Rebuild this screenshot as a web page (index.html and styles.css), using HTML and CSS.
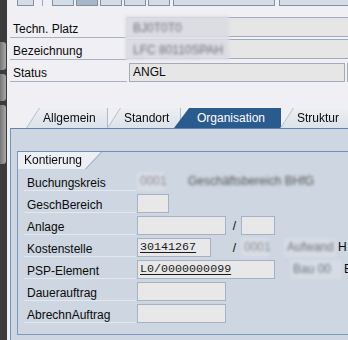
FILE: index.html
```html
<!DOCTYPE html>
<html lang="de">
<head>
  <meta charset="UTF-8" />
  <title>Technischer Platz</title>
  <link rel="stylesheet" href="styles.css">
</head>
<body>

<div class="dock">
  <span class="dock-btn b1"></span>
  <span class="dock-btn b2"></span>
  <span class="dock-btn b3"></span>
</div>

<div class="main">
  <div class="toolbar">
    <span class="tb w17"></span>
    <span class="tb-sep"></span>
    <span class="tb w22"></span>
    <span class="tb w22 dark"></span>
    <span class="tb w22"></span>
    <span class="tb w22"></span>
    <span class="tb w22"></span>
    <span class="tb w102"></span>
    <span class="tb w80 gap"></span>
  </div>

  <div class="hdr">
    <div class="row">
      <span class="lbl">Techn. Platz</span>
      <span class="fld flat"><span class="blur patch">BJ0T0T0</span></span>
    </div>
    <div class="row">
      <span class="lbl">Bezeichnung</span>
      <span class="fld flat"><span class="blur patch">LFC 80110SPAH</span></span>
    </div>
    <div class="row">
      <span class="lbl">Status</span>
      <span class="fld status">ANGL</span>
      <span class="fld rest"></span>
    </div>
  </div>

  <div class="tabs">
    <div class="tab t1"><span>Allgemein</span></div>
    <div class="tab t2"><span>Standort</span></div>
    <div class="tab on"><span>Organisation</span></div>
    <div class="tab t4"><span>Struktur</span></div>
  </div>

  <div class="panel">
    <div class="group">
      <div class="grp-head"><span>Kontierung</span></div>

      <div class="grow">
        <span class="glbl">Buchungskreis</span>
        <span class="blur bk">0001</span>
        <span class="blur bk-txt">Geschäftsbereich BHfG</span>
      </div>
      <div class="grow">
        <span class="glbl">GeschBereich</span>
        <span class="in w32"></span>
      </div>
      <div class="grow">
        <span class="glbl">Anlage</span>
        <span class="in w89"></span>
        <span class="sl s15">/</span>
        <span class="in w34"></span>
      </div>
      <div class="grow">
        <span class="glbl">Kostenstelle</span>
        <span class="in w74"><u>30141267</u></span>
        <span class="sl s30">/</span>
        <span class="blur bk w34">0001</span>
        <span class="blur side">Aufwand</span>
        <span class="cut">H</span>
      </div>
      <div class="grow">
        <span class="glbl">PSP-Element</span>
        <span class="in w138"><u>L0/0000000099</u></span>
        <span class="blur side">Bau 00</span>
        <span class="cut">E</span>
      </div>
      <div class="grow">
        <span class="glbl">Dauerauftrag</span>
        <span class="in w89"></span>
      </div>
      <div class="grow">
        <span class="glbl">AbrechnAuftrag</span>
        <span class="in w89"></span>
      </div>
    </div>
  </div>
</div>

</body>
</html>
```

FILE: styles.css
```css
* { box-sizing: border-box; }
body {
  margin: 0;
  width: 348px;
  height: 340px;
  overflow: hidden;
  display: flex;
  background: #efeff4;
  color: #0a0a0a;
  font-family: "Liberation Sans", Arial, sans-serif;
  font-size: 12px;
}

/* left dock */
.dock {
  flex: none;
  width: 7px;
  background: #3b3b3b;
  display: flex;
  flex-direction: column;
  gap: 4px;
  padding-top: 42px;
}
.dock-btn {
  display: block;
  margin-right: 1px;
  background: linear-gradient(to right, #767676, #a8a8a8);
  border-radius: 0 3px 3px 0;
}
.b1 { height: 28px; }
.b2 { height: 27px; }
.b3 { height: 59px; }

.main { flex: 1; min-width: 0; }

/* toolbar strip */
.toolbar {
  display: flex;
  align-items: flex-start;
  gap: 2px;
  height: 7px;
  padding-left: 10px;
  white-space: nowrap;
}
.tb {
  flex: none;
  height: 6px;
  border: 1px solid #7f92a8;
  border-top: none;
  background: #d5dce6;
}
.tb.dark { background: #a9b6c6; }
.tb-sep { flex: none; width: 1px; height: 6px; background: #9aa7b8; margin: 0 7px 0 6px; }
.w17 { width: 17px; }
.w22 { width: 22px; }
.w102 { width: 102px; margin-left: 1px; }
.w80 { width: 80px; }
.tb.gap { margin-left: 2px; }

/* header rows */
.hdr { padding: 9px 0 0 3px; }
.row {
  display: flex;
  align-items: flex-end;
  height: 22px;
}
.lbl {
  flex: none;
  width: 117px;
  height: 22px;
  padding: 6px 0 0 3px;
  line-height: 14px;
  border-bottom: 1px solid #a7b1bf;
}
.fld {
  height: 19px;
  border: 1px solid #a0acbb;
  background: #e6e6e6;
  line-height: 17px;
  padding-left: 3px;
}
.fld.flat {
  flex: 1;
  height: 20px;
  padding-left: 0;
  margin-bottom: 1px;
  border-right: none;
  display: flex;
}
.fld.status { flex: none; width: 216px; margin-left: 2px; }
.fld.rest { flex: 1; margin-left: 2px; border-right: none; }

.blur { filter: blur(1.4px); color: #6c6c7a; }
.patch {
  flex: none;
  width: 104px;
  margin: -2px 0 -2px -3px;
  padding: 4px 0 0 8px;
  background: #dcdde2;
}

/* tabs */
.tabs {
  display: flex;
  margin-top: 26px;
  padding-left: 20px;
  height: 20px;
}
.tab {
  flex: none;
  height: 20px;
  filter: drop-shadow(-1px 0 0 #b3bfcc);
}
.tab span {
  display: block;
  height: 20px;
  line-height: 20px;
  padding-left: 16px;
  background: linear-gradient(#eceff3, #dce2e9);
  border-right: 1px solid #b0bbc8;
  clip-path: polygon(13px 0, 100% 0, 100% 100%, 0 100%);
}
.t1 { width: 81px; }
.t2 { width: 73px; }
.t4 { width: 80px; }
.tab.on { width: 107px; margin-left: -7px; filter: none; }
.tab.on span {
  padding-left: 23px;
  background: #2a5b8e;
  color: #fff;
  border-right: none;
  clip-path: polygon(15px 0, 100% 0, 100% 100%, 0 100%);
}

/* panel + group */
.panel {
  margin-left: 3px;
  height: 220px;
  padding: 22px 0 0 6px;
  background: #cdd6e1;
  border-top: 1px solid #5f84b0;
  border-left: 1px solid #7294bb;
}
.group {
  border-top: 1px solid #6f8fb7;
  border-left: 1px solid #7d9abd;
  border-bottom: 1px solid #7d9abd;
  padding-bottom: 11px;
}
.grp-head {
  width: 83px;
  height: 17px;
  filter: drop-shadow(1px 0 0 #8aa2c0);
}
.grp-head span {
  display: block;
  height: 17px;
  line-height: 16px;
  padding-left: 6px;
  background: #eceff4;
  clip-path: polygon(0 0, 100% 0, calc(100% - 16px) 100%, 0 100%);
}
.grow {
  display: flex;
  align-items: flex-end;
  height: 22px;
  padding-left: 6px;
  white-space: nowrap;
}
.glbl {
  flex: none;
  width: 112px;
  height: 22px;
  margin-right: 1px;
  padding: 7px 0 0 3px;
  line-height: 14px;
  border-bottom: 1px solid #e3e8ee;
}
.in {
  flex: none;
  height: 19px;
  border: 1px solid #a5b2c2;
  background: #e8e8e8;
  padding-left: 2px;
  line-height: 17px;
  font-family: "Liberation Mono", "Courier New", monospace;
  font-size: 11.7px;
  color: #1a1a22;
}
.in u { text-underline-offset: 2px; }
.w32 { width: 32px; }
.w34 { width: 34px; }
.w74 { width: 74px; }
.w89 { width: 89px; }
.w138 { width: 138px; }
.sl { flex: none; text-align: right; padding-right: 5px; line-height: 18px; }
.s15 { width: 15px; }
.s30 { width: 30px; }
.bk {
  flex: none;
  width: 28px;
  height: 19px;
  line-height: 19px;
  padding-left: 3px;
  background: #d8dde5;
  color: #8a8a94;
}
.bk-txt { margin-left: 23px; line-height: 19px; color: #555; }
.side {
  flex: none;
  width: 52px;
  height: 19px;
  margin-left: 15px;
  padding-left: 3px;
  line-height: 19px;
  background: #d6dce4;
  color: #6f7480;
  overflow: hidden;
}
.cut { margin-left: 2px; line-height: 19px; }
```
